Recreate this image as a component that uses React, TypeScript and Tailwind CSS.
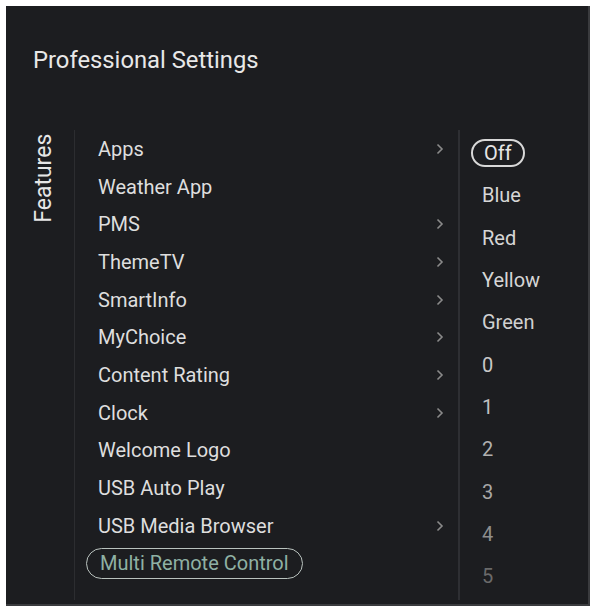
import React from "react";

const items: { label: string; chevron: boolean }[] = [
  { label: "Apps", chevron: true },
  { label: "Weather App", chevron: false },
  { label: "PMS", chevron: true },
  { label: "ThemeTV", chevron: true },
  { label: "SmartInfo", chevron: true },
  { label: "MyChoice", chevron: true },
  { label: "Content Rating", chevron: true },
  { label: "Clock", chevron: true },
  { label: "Welcome Logo", chevron: false },
  { label: "USB Auto Play", chevron: false },
  { label: "USB Media Browser", chevron: true },
];

const options: { label: string; cls: string }[] = [
  { label: "Blue", cls: "text-[#d6d6d6]" },
  { label: "Red", cls: "text-[#d6d6d6]" },
  { label: "Yellow", cls: "text-[#d6d6d6]" },
  { label: "Green", cls: "text-[#d0d0d0]" },
  { label: "0", cls: "text-[#c8c8c8]" },
  { label: "1", cls: "text-[#c0c0c0]" },
  { label: "2", cls: "text-[#b0b0b0]" },
  { label: "3", cls: "text-[#a8a8a8]" },
  { label: "4", cls: "text-[#8e8e8e]" },
  { label: "5", cls: "text-[#6a6a6a]" },
];

function Chevron() {
  return (
    <svg width="8" height="12" viewBox="0 0 8 12" className="mr-[14px]">
      <path d="M1.5 1.5 L6 6 L1.5 10.5" fill="none" stroke="#8a8a8a" strokeWidth="1.6" />
    </svg>
  );
}

export default function App() {
  return (
    <div className="w-[595px] h-[612px] bg-white p-[6px] pr-[5px] pb-[6px]" style={{ fontFamily: "Roboto, 'Liberation Sans', sans-serif" }}>
      <div className="w-full h-full bg-[#1c1d20] border-r-2 border-b-2 border-[#3a3b3e] flex flex-col">
        <div className="h-[124px] pl-[27px] pt-[37px] text-[23.8px] leading-[34px] text-[#e8e8e8]">
          Professional Settings
        </div>
        <div className="flex flex-1 pb-[4px]">
          <div className="w-[69px] border-r border-[#2c2d30] flex justify-center">
            <div className="h-[96px] w-[26px] ml-[9px] flex items-center justify-center">
              <span className="block -rotate-90 whitespace-nowrap text-[23px] text-[#e6e6e6]">Features</span>
            </div>
          </div>
          <div className="w-[385px] border-r-2 border-[#2e2f33] flex flex-col">
            {items.map((it) => (
              <div key={it.label} className="h-[37.7px] flex items-center justify-between pl-[23px] text-[20px] text-[#dedede]">
                <span>{it.label}</span>
                {it.chevron && <Chevron />}
              </div>
            ))}
            <div className="h-[37.7px] flex items-center pl-[11px]">
              <span className="rounded-full border-[1.5px] border-[#b9c2be] px-[13px] h-[31px] flex items-center text-[20px] text-[#8fb1a4]">
                Multi Remote Control
              </span>
            </div>
          </div>
          <div className="flex-1 flex flex-col pt-[2px]">
            <div className="h-[42.3px] flex items-center pl-[11px]">
              <span className="rounded-full border-2 border-[#d8d8d8] h-[28px] px-[11px] flex items-center text-[20px] text-[#e6e6e6]">
                Off
              </span>
            </div>
            {options.map((o) => (
              <div key={o.label} className={`h-[42.3px] flex items-center pl-[22px] text-[20px] ${o.cls}`}>
                {o.label}
              </div>
            ))}
          </div>
        </div>
      </div>
    </div>
  );
}
